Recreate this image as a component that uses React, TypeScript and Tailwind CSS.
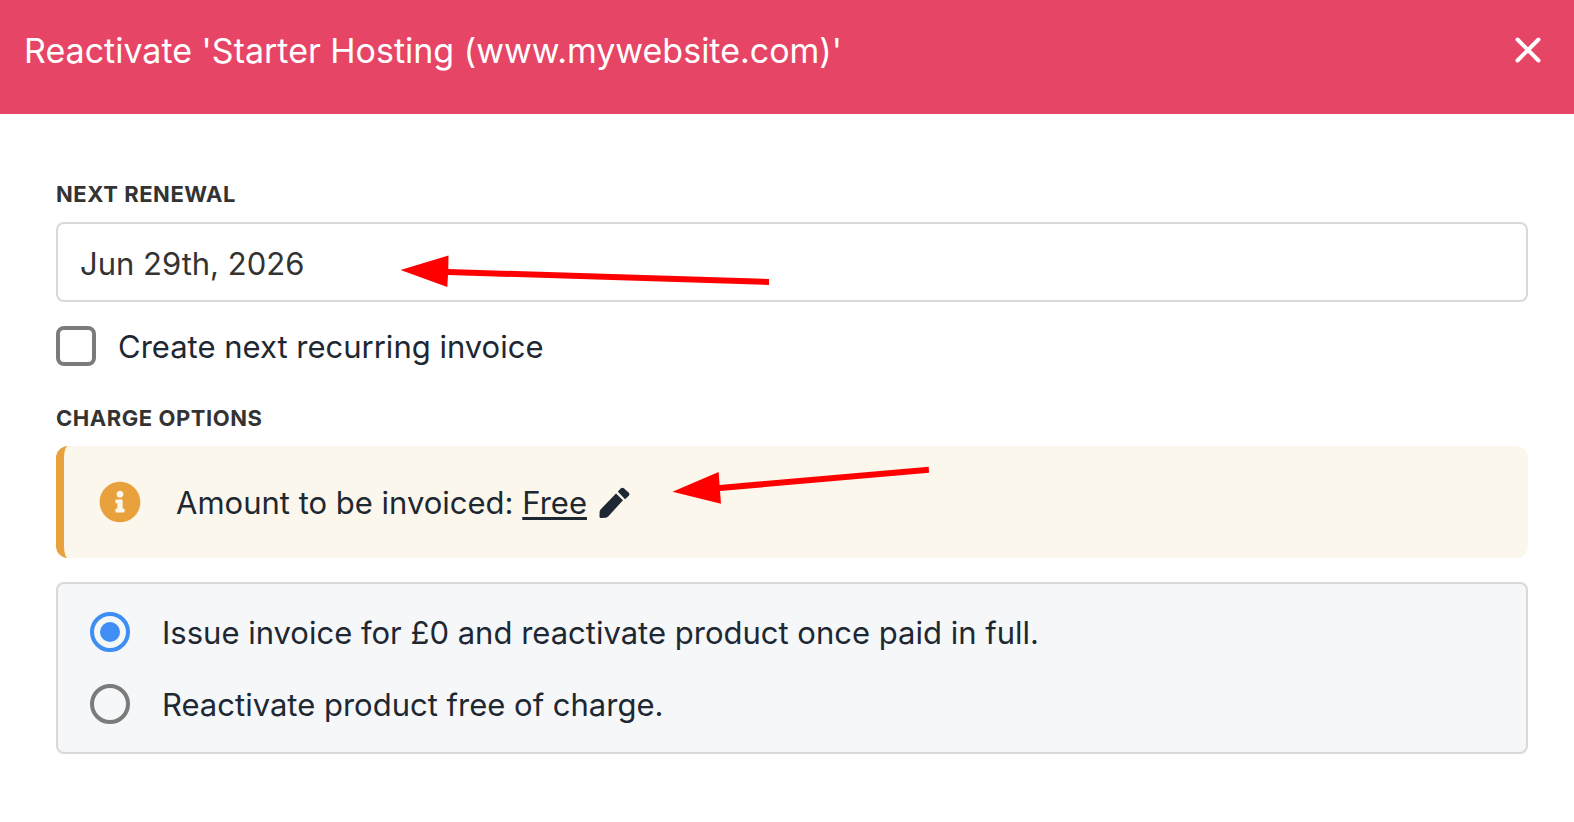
import { useState } from "react";
import { FaInfoCircle } from "react-icons/fa";

const chargeOptions = [
  { id: "invoice", label: "Issue invoice for £0 and reactivate product once paid in full." },
  { id: "free", label: "Reactivate product free of charge." },
];

function CloseIcon() {
  return (
    <svg width="28" height="28" viewBox="0 0 28 28" fill="none" stroke="currentColor" strokeWidth="4" strokeLinecap="round">
      <path d="M3.5 3.5L24.5 24.5M24.5 3.5L3.5 24.5" />
    </svg>
  );
}

function PencilIcon() {
  return (
    <svg width="32" height="32" viewBox="0 0 32 32" fill="currentColor">
      <path d="M17 7.4L24 14.3L9.4 30.2Q8.2 31.5 6.6 31.7L2.2 32Q0.5 32.1 0.5 30.4L0.6 26Q0.7 24.4 1.8 23.3Z" />
      <path d="M18.8 5.6L21.8 2.5Q23.4 0.9 25.1 2.4L29.8 6.7Q31.3 8.2 29.8 9.8L26 13.3Z" />
    </svg>
  );
}

export default function App() {
  const [date, setDate] = useState("Jun 29th, 2026");
  const [recurring, setRecurring] = useState(false);
  const [charge, setCharge] = useState("invoice");

  return (
    <div className="w-full bg-white font-['Inter','Liberation_Sans',sans-serif] text-[31px] leading-9 text-[#1e2832]">
      <header className="flex items-start justify-between bg-[#e64565] pt-7 pr-8 pb-10 pl-6 text-white">
        <h1 className="text-[34px] leading-[46px]">
          Reactivate 'Starter Hosting (www.mywebsite.com)'
        </h1>
        <button type="button" aria-label="Close" className="flex h-11 items-center">
          <CloseIcon />
        </button>
      </header>

      <form className="flex flex-col pt-16 pr-[46px] pb-16 pl-14">
        <label htmlFor="renewal" className="mb-3 text-[22px] leading-8 font-bold tracking-wide text-[#333] uppercase">
          Next renewal
        </label>
        <div className="relative">
          <input
            id="renewal"
            type="text"
            value={date}
            onChange={(e) => setDate(e.target.value)}
            className="block h-20 w-full rounded-lg border-2 border-[#d9d9d9] px-[22px] pt-0.5 text-[#333]"
          />
          <svg className="pointer-events-none absolute top-8 left-[344px]" width="370" height="36" fill="#f00">
            <path d="M0.5 16L48.5 1.5L48.3 15L369 25V31L48 21L47.3 33Z" />
          </svg>
        </div>

        <label className="mt-6 flex items-center gap-[22px]">
          <input
            type="checkbox"
            checked={recurring}
            onChange={(e) => setRecurring(e.target.checked)}
            className="size-10 appearance-none rounded-lg border-4 border-[#7b7b7b] checked:bg-[#3f8ef4]"
          />
          <span className="pt-0.5">Create next recurring invoice</span>
        </label>

        <fieldset className="mt-9">
          <legend className="mb-3 text-[22px] leading-8 font-bold tracking-wide text-[#333] uppercase">
            Charge options
          </legend>

          <div className="relative flex h-28 items-center rounded-xl border-l-8 border-[#e8a13c] bg-[#fcf7ec] pl-[35px]">
            <FaInfoCircle size={42} className="mr-[35px] text-[#e8a13c]" />
            <span className="pt-0.5">
              Amount to be invoiced:{" "}
              <a href="#amount" className="underline decoration-[3px] underline-offset-3">Free</a>
            </span>
            <button type="button" aria-label="Edit amount" className="ml-3">
              <PencilIcon />
            </button>
            <svg className="pointer-events-none absolute top-5 left-[608px]" width="260" height="40" fill="#f00">
              <path d="M0.5 25.7L46.6 6L47.6 19L256.7 0.7L257 6.7L48 25L49 37.7Z" />
            </svg>
          </div>

          <div className="mt-6 flex flex-col gap-8 rounded-lg border-2 border-[#d9d9d9] bg-[#f5f7f9] px-8 py-7">
            {chargeOptions.map((option) => (
              <label key={option.id} className="flex items-center gap-8">
                <input
                  type="radio"
                  name="charge"
                  checked={charge === option.id}
                  onChange={() => setCharge(option.id)}
                  className="grid size-10 appearance-none place-items-center rounded-full border-4 border-[#7b7b7b] before:size-5 before:rounded-full checked:border-[#3f8ef4] checked:before:bg-[#3f8ef4]"
                />
                <span className="pt-0.5">{option.label}</span>
              </label>
            ))}
          </div>
        </fieldset>
      </form>
    </div>
  );
}
